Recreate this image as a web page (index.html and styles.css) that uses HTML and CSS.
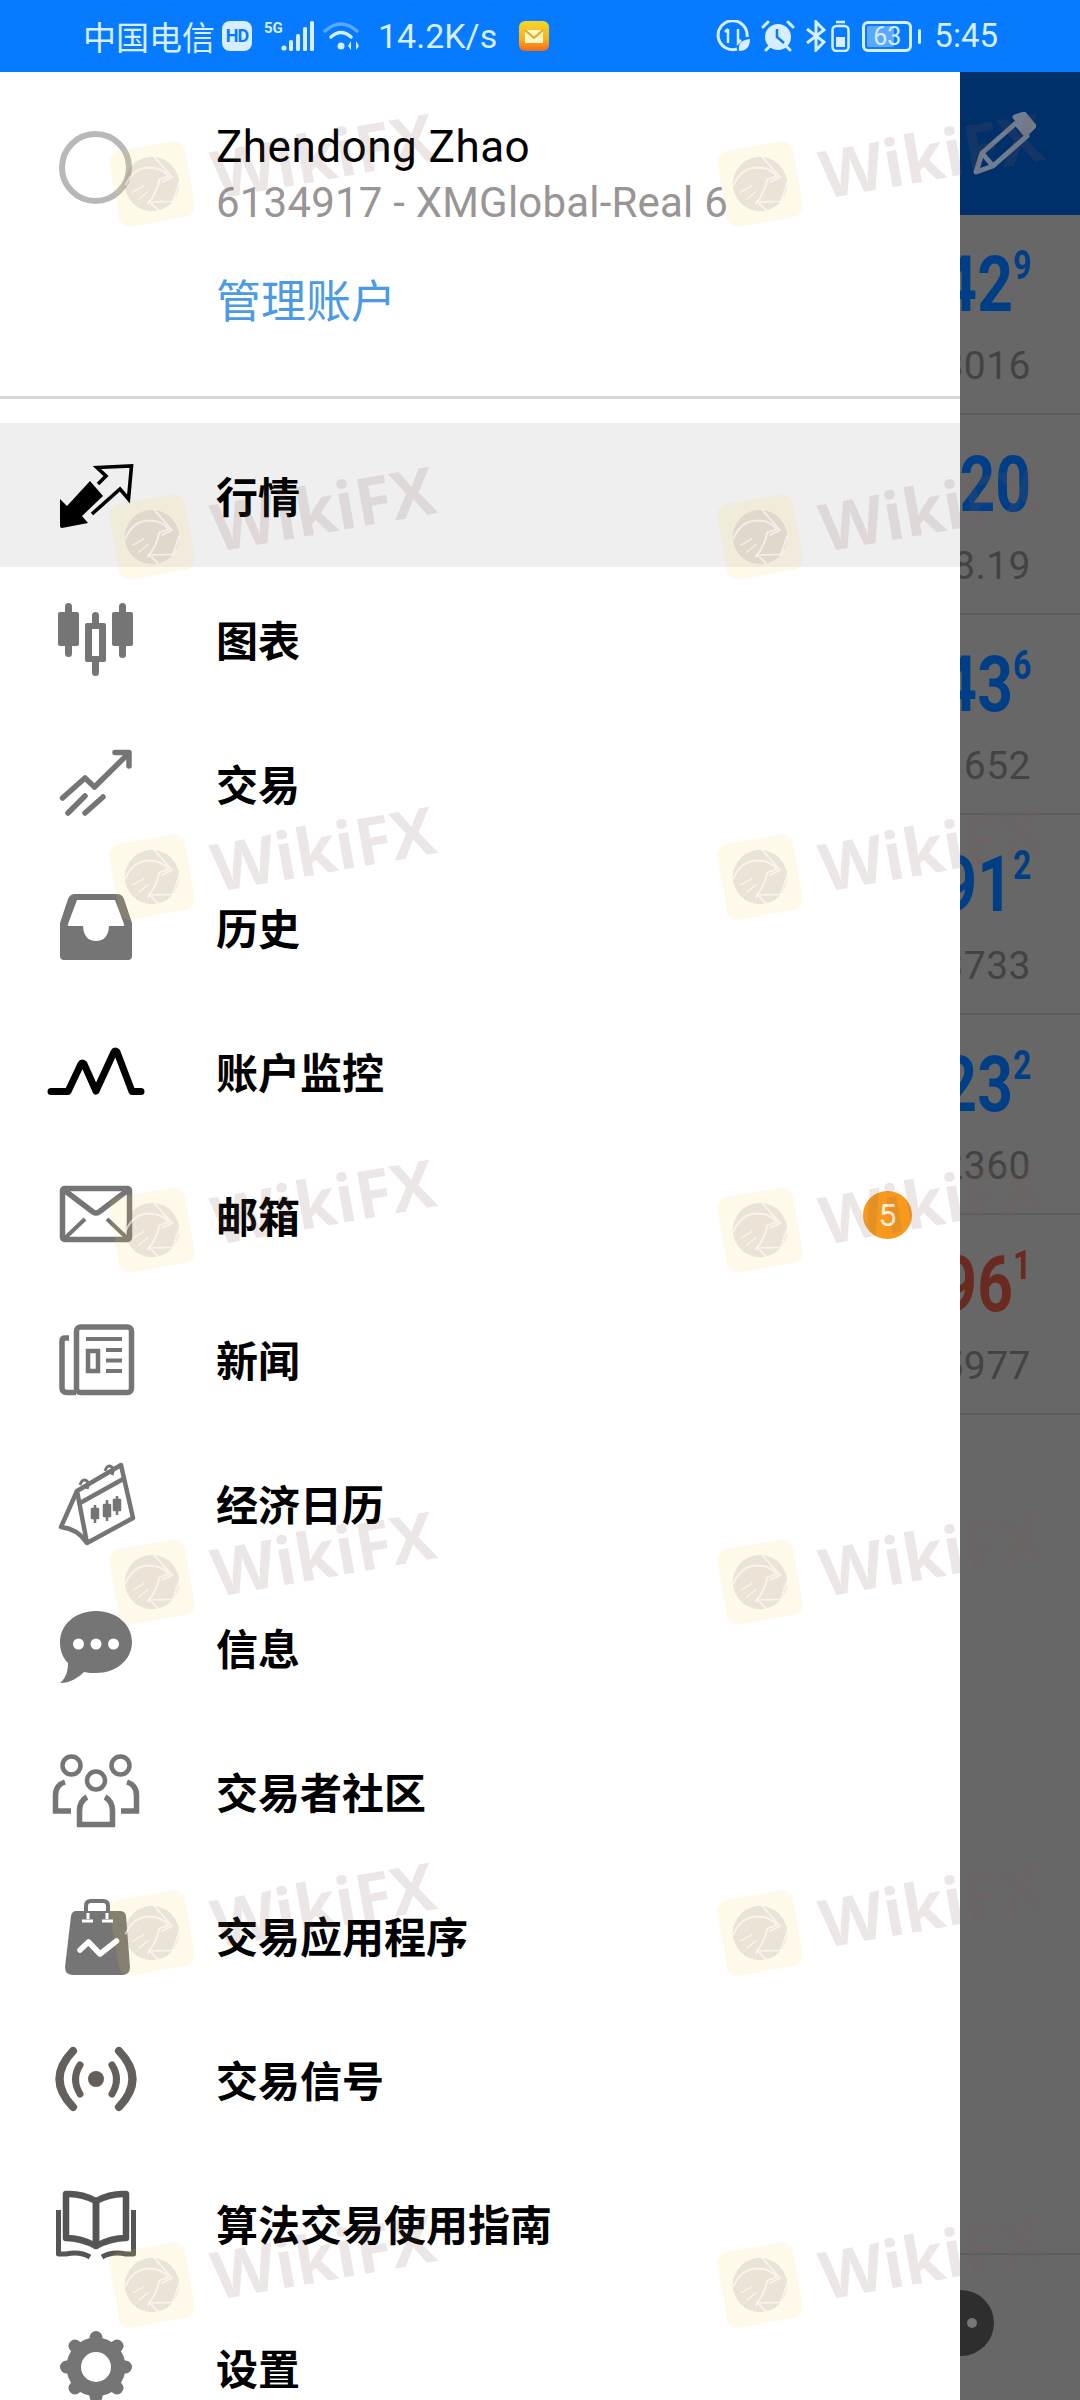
FILE: index.html
```html
<!DOCTYPE html>
<html lang="en">
  <head>
    <meta charset="UTF-8" />
    <meta name="viewport" content="width=device-width, initial-scale=1.0" />
    <title>Menu</title>
    <link rel="stylesheet" href="styles.css">
  </head>
  <body>
    <svg class="defs" width="0" height="0">
      <symbol id="eagle" viewBox="0 0 100 100">
        <rect x="2" y="2" width="96" height="96" rx="14" fill="#ffd35c" fill-opacity="0.13" />
        <circle cx="50" cy="50" r="34" fill="#8a7a78" fill-opacity="0.17" />
        <g fill="none" stroke="#fff" stroke-opacity="0.6" stroke-width="2.4">
          <path d="M58 16 L76 46 L62 50" />
          <path d="M84 54 L72 76 L46 72" />
          <path d="M52 84 L42 70" />
          <path d="M17 46 Q30 26 50 29 Q66 32 72 44 L60 46 Q54 62 40 74" />
          <path d="M24 56 L40 50 M30 66 L44 58" stroke-width="1.6" />
        </g>
      </symbol>
    </svg>

    <div class="status">
      <div class="status-group">
        <span class="carrier">中国电信</span>
        <span class="hd">HD</span>
        <svg class="st-signal" width="50" height="32" viewBox="0 0 50 32">
          <text x="0" y="13" class="five-g">5G</text>
          <g fill="#d6eeff">
            <circle cx="20" cy="28" r="2.6" />
            <rect x="25" y="20" width="4" height="11" rx="1.5" />
            <rect x="32" y="14" width="4" height="17" rx="1.5" />
            <rect x="39" y="7" width="4" height="24" rx="1.5" />
            <rect x="46" y="1" width="4" height="30" rx="1.5" />
          </g>
        </svg>
        <svg class="st-wifi" width="38" height="30" viewBox="0 0 38 30" fill="none" stroke-linecap="round">
          <path d="M2 10 Q18 -4 34 10" stroke="#5aa9ff" stroke-width="3.5" />
          <path d="M8 16 Q18 7 28 16" stroke="#d6eeff" stroke-width="3.5" />
          <circle cx="18" cy="25" r="3.5" fill="#d6eeff" />
          <path d="M28 20 V29 L25 25 Z M33 20 V29 L36 25 Z" fill="#d6eeff" />
        </svg>
        <span class="speed">14.2K/s</span>
        <svg class="st-mail" width="30" height="30" viewBox="0 0 30 30">
          <defs>
            <linearGradient id="mailbg" x1="0" y1="0" x2="0" y2="1">
              <stop offset="0" stop-color="#f2d72f" />
              <stop offset="0.6" stop-color="#fbb017" />
              <stop offset="1" stop-color="#f4691a" />
            </linearGradient>
          </defs>
          <rect width="30" height="30" rx="6" fill="url(#mailbg)" />
          <rect x="6" y="9" width="18" height="13" fill="#fff6c8" />
          <path d="M6 9 L15 17 L24 9" fill="none" stroke="#e8a51c" stroke-width="2" />
        </svg>
      </div>
      <div class="status-group">
        <svg class="st-data" width="36" height="32" viewBox="0 0 36 32" fill="none" stroke="#d6eeff" stroke-width="3">
          <path d="M22 29 A14.5 14.5 0 1 1 32 17" />
          <path d="M13 9 V23 M10 12 L13 9 M23 9 V23 L26 20" stroke-width="2.5" />
          <path d="M24 31 Q22 20 35 19 Q35 31 24 31 Z" fill="#d6eeff" stroke="none" />
        </svg>
        <svg class="st-alarm" width="34" height="32" viewBox="0 0 34 32">
          <circle cx="17" cy="17" r="13" fill="#d6eeff" />
          <path d="M16 9 V17 L23 23" fill="none" stroke="#067bff" stroke-width="2.5" />
          <path d="M2 7 L7 2 M32 7 L27 2 M5 30 L8 27 M29 30 L26 27" stroke="#d6eeff" stroke-width="3" stroke-linecap="round" />
        </svg>
        <svg class="st-bt" width="20" height="32" viewBox="0 0 20 32" fill="none" stroke="#d6eeff" stroke-width="3">
          <path d="M1 9 L18 22 L10 30 V2 L18 10 L1 23" />
        </svg>
        <svg class="st-small-batt" width="19" height="32" viewBox="0 0 19 32" fill="none" stroke="#d6eeff" stroke-width="2.5">
          <path d="M5 2 H14" />
          <rect x="1.5" y="6" width="16" height="25" rx="4" />
          <rect x="5" y="17" width="9" height="10" fill="#d6eeff" stroke="none" />
        </svg>
        <div class="battery">
          <span class="battery-level"></span>
          <span class="battery-num">63</span>
        </div>
        <span class="battery-tip"></span>
        <span class="clock">5:45</span>
      </div>
    </div>

    <div class="main">
      <div class="drawer">
        <div class="account">
          <div class="avatar"></div>
          <div class="account-text">
            <div class="acc-name">Zhendong Zhao</div>
            <div class="acc-server">6134917 - XMGlobal-Real 6</div>
            <div class="acc-manage">管理账户</div>
          </div>
        </div>

        <div class="menu">
          <div class="menu-row active">
            <svg class="icon" viewBox="0 0 100 100">
              <path d="M14 54 L21 61 L44 36 L57 51 L36 71 L42 78 L16 83 Q14 83 14 81 Z" />
              <path d="M46 69 L74 44 L82.5 54 L85.5 21 L51 22.5 L60 31 L52 39" fill="none" stroke="#000" stroke-width="3.6" stroke-linejoin="miter" />
            </svg>
            <span class="menu-label">行情</span>
          </div>
          <div class="menu-row">
            <svg class="icon" viewBox="0 0 100 100" fill="#757575">
              <rect x="19" y="14" width="7" height="54" rx="3.5" />
              <rect x="12" y="23" width="21" height="34" rx="2" />
              <rect x="73" y="14" width="7" height="55" rx="3.5" />
              <rect x="66" y="23" width="21" height="34" rx="2" />
              <rect x="46" y="23" width="7" height="64" rx="3.5" />
              <path fill-rule="evenodd" d="M41 34 H58 Q60 34 60 36 V71 Q60 73 58 73 H41 Q39 73 39 71 V36 Q39 34 41 34 Z M46 40 V67 H53 V40 Z" />
              <rect x="46" y="40" width="7" height="27" fill="#fff" />
            </svg>
            <span class="menu-label">图表</span>
          </div>
          <div class="menu-row">
            <svg class="icon" viewBox="0 0 100 100" fill="none" stroke="#757575" stroke-width="5.5" stroke-linecap="round" stroke-linejoin="round">
              <path d="M16.5 65 L39 45 L48.5 54 L80 23" />
              <path d="M69 19.5 H83 V33" />
              <path d="M22 80 L39 63 M39 80 L57 64" stroke-width="5.5" />
            </svg>
            <span class="menu-label">交易</span>
          </div>
          <div class="menu-row">
            <svg class="icon" viewBox="0 0 100 100">
              <path fill="#757575" fill-rule="evenodd" d="M29 17 H71 Q76 17 78 22 L86 46 V79 Q86 83 82 83 H18 Q14 83 14 79 V46 L22 22 Q24 17 29 17 Z M31 23 L22 47 Q21 49 24 49 H37 Q38 64 50 64 Q62 64 63 49 H76 Q79 49 78 47 L69 23 Z" />
            </svg>
            <span class="menu-label">历史</span>
          </div>
          <div class="menu-row">
            <svg class="icon" viewBox="0 0 100 100" fill="none" stroke="#000" stroke-width="7" stroke-linecap="round" stroke-linejoin="round">
              <path d="M5 70.5 H22 L35 43 Q36 41 38 43 L50 70 L68 31 Q69 29 71 31 L86 70.5 H95" />
            </svg>
            <span class="menu-label">账户监控</span>
          </div>
          <div class="menu-row">
            <svg class="icon" viewBox="0 0 100 100" fill="none" stroke="#757575" stroke-width="5.5" stroke-linejoin="round">
              <rect x="16.5" y="23.5" width="67" height="51" rx="2" />
              <path d="M18 25 L47 47 Q50 49 53 47 L82 25" />
              <path d="M19 73 L39 54 M81 73 L61 54" stroke-width="4" />
            </svg>
            <span class="menu-label">邮箱</span>
            <span class="badge">5</span>
          </div>
          <div class="menu-row">
            <svg class="icon" viewBox="0 0 100 100" fill="none" stroke="#757575" stroke-width="5.5">
              <rect x="30.5" y="18" width="55" height="65.5" rx="4" />
              <path d="M23 29 H19 Q16 29 16 32 V79 Q16 83.5 21 83.5 H30" />
              <path d="M40 30 H76 M60 41 H76 M60 51.5 H76 M60 62 H76" stroke-width="4" />
              <rect x="42" y="42" width="10" height="20" stroke-width="4.5" />
            </svg>
            <span class="menu-label">新闻</span>
          </div>
          <div class="menu-row">
            <svg class="icon" viewBox="0 0 100 100" fill="none" stroke="#757575" stroke-width="4.5" stroke-linejoin="round">
              <path d="M31 38 L75 12 L87 65 L41 90 Z" />
              <path d="M34 50 L79 25" />
              <path d="M31 38 L15 74 Q32 76 41 90" />
              <path d="M34 32 Q36 25 41 28 Q43 31 41 36 M59 18 Q61 11 66 14 Q68 17 66 22" stroke-width="3" />
              <path d="M49 52 V70 M61 47 V68 M71 43 V62" stroke-width="2.5" />
              <path d="M46 56 H52 V65 H46 Z M58 52 H64 V63 H58 Z M68 47 H74 V57 H68 Z" stroke-width="2.5" fill="#757575" />
            </svg>
            <span class="menu-label">经济日历</span>
          </div>
          <div class="menu-row">
            <svg class="icon" viewBox="0 0 100 100">
              <path fill="#757575" d="M50 14 C71 14 86 28 86 45 C86 63 70 76 50 76 C46 76 42 76 38 75 C32 81 24 86 14 86 C20 81 22 74 22 66 C16 60 14 53 14 45 C14 28 29 14 50 14 Z" />
              <g fill="#fff">
                <ellipse cx="32.5" cy="47" rx="5.5" ry="5.5" />
                <ellipse cx="50" cy="47" rx="5.5" ry="5.5" />
                <ellipse cx="67.5" cy="47" rx="5.5" ry="5.5" />
              </g>
            </svg>
            <span class="menu-label">信息</span>
          </div>
          <div class="menu-row">
            <svg class="icon" viewBox="0 0 100 100" fill="none" stroke="#757575" stroke-width="5.5">
              <circle cx="25.5" cy="24.5" r="9" stroke-width="4.5" />
              <circle cx="74.5" cy="24.5" r="9" stroke-width="4.5" />
              <circle cx="50" cy="39.5" r="9" stroke-width="4.5" />
              <path d="M19 41 Q9.5 44 9.5 54 V70 H25" />
              <path d="M81 41 Q90.5 44 90.5 54 V70 H75" />
              <path d="M41 56 Q33.5 60 33.5 70 V83.5 H66.5 V70 Q66.5 60 59 56" />
            </svg>
            <span class="menu-label">交易者社区</span>
          </div>
          <div class="menu-row">
            <svg class="icon" viewBox="0 0 100 100">
              <path fill="#757575" d="M30 26 H74 Q79 26 80 31 L84 82 Q84 90 76 90 H27 Q19 90 19 82 L25 31 Q26 26 30 26 Z" />
              <path d="M40 33 V21 Q40 16 45 16 H57 Q62 16 62 21 V33" fill="none" stroke="#757575" stroke-width="4" />
              <path d="M36 36 H47 M56 36 H67 M42 28 V34 M61 28 V34" stroke="#fff" stroke-width="3" fill="none" />
              <path d="M34 65 L42.5 57 L54 69 L70.5 56" fill="none" stroke="#fff" stroke-width="5.5" stroke-linecap="round" stroke-linejoin="round" />
            </svg>
            <span class="menu-label">交易应用程序</span>
          </div>
          <div class="menu-row">
            <svg class="icon" viewBox="0 0 100 100" fill="none" stroke="#655f5c" stroke-linecap="round">
              <ellipse cx="50" cy="50" rx="8" ry="8" fill="#655f5c" stroke="none" />
              <path d="M34 36 Q25 50 34 65 M66 36 Q75 50 66 65" stroke-width="7" />
              <path d="M27 22 Q0 50 27 78 M73 22 Q100 50 73 78" stroke-width="8" />
            </svg>
            <span class="menu-label">交易信号</span>
          </div>
          <div class="menu-row">
            <svg class="icon" viewBox="0 0 100 100" fill="none" stroke="#555" stroke-width="6.5" stroke-linejoin="round">
              <path d="M20 21 Q35 20 50 28 V73 Q35 65 20 65 Z" />
              <path d="M80 21 Q65 20 50 28 V73 Q65 65 80 65 Z" />
              <path d="M12.5 37 V81 H20 Q34 78 44 84 M87.5 37 V81 H80 Q66 78 56 84" stroke-width="5" />
            </svg>
            <span class="menu-label">算法交易使用指南</span>
          </div>
          <div class="menu-row">
            <svg class="icon" viewBox="0 0 100 100" fill="none" stroke="#757575">
              <circle cx="50" cy="50" r="22" stroke-width="15" />
              <g stroke-width="13" stroke-linecap="round">
                <path d="M50 20.5 V79.5 M20.5 50 H79.5 M29 29 L71 71 M71 29 L29 71" />
              </g>
              <circle cx="50" cy="50" r="15" fill="#fff" stroke="none" />
            </svg>
            <span class="menu-label">设置</span>
          </div>
        </div>
      </div>

      <div class="scrim">
        <div class="scrim-head">
          <svg width="64" height="64" viewBox="0 0 64 64" fill="none" stroke="#717d90" stroke-width="5" stroke-linejoin="round">
            <path d="M4 60 L10 41 L44 11 L55 24 L21 54 Z" />
            <path d="M10 41 L21 54" />
            <path d="M43 5 L52 2 L62 14 L56 20 Z" fill="#717d90" />
          </svg>
        </div>
        <div class="quote">
          <div class="q-big">1.1042<sup>9</sup></div>
          <div class="q-small">1.08016</div>
        </div>
        <div class="quote">
          <div class="q-big">1420</div>
          <div class="q-small">1278.19</div>
        </div>
        <div class="quote">
          <div class="q-big">1.2143<sup>6</sup></div>
          <div class="q-small">1.1652</div>
        </div>
        <div class="quote">
          <div class="q-big">1.3791<sup>2</sup></div>
          <div class="q-small">1.3733</div>
        </div>
        <div class="quote">
          <div class="q-big">0.9123<sup>2</sup></div>
          <div class="q-small">0.92360</div>
        </div>
        <div class="quote down">
          <div class="q-big">1.5996<sup>1</sup></div>
          <div class="q-small">1.5977</div>
        </div>
        <div class="scrim-bottom">
          <div class="fab"><span class="fab-dot"></span><span class="fab-dot"></span></div>
        </div>
      </div>
    </div>

    <div class="marks">
      <div class="wm"><svg class="wm-logo"><use href="#eagle" /></svg><span>WikiFX</span></div>
      <div class="wm"><svg class="wm-logo"><use href="#eagle" /></svg><span>WikiFX</span></div>
      <div class="wm"><svg class="wm-logo"><use href="#eagle" /></svg><span>WikiFX</span></div>
      <div class="wm"><svg class="wm-logo"><use href="#eagle" /></svg><span>WikiFX</span></div>
      <div class="wm"><svg class="wm-logo"><use href="#eagle" /></svg><span>WikiFX</span></div>
      <div class="wm"><svg class="wm-logo"><use href="#eagle" /></svg><span>WikiFX</span></div>
      <div class="wm"><svg class="wm-logo"><use href="#eagle" /></svg><span>WikiFX</span></div>
      <div class="wm"><svg class="wm-logo"><use href="#eagle" /></svg><span>WikiFX</span></div>
      <div class="wm"><svg class="wm-logo"><use href="#eagle" /></svg><span>WikiFX</span></div>
      <div class="wm"><svg class="wm-logo"><use href="#eagle" /></svg><span>WikiFX</span></div>
      <div class="wm"><svg class="wm-logo"><use href="#eagle" /></svg><span>WikiFX</span></div>
      <div class="wm"><svg class="wm-logo"><use href="#eagle" /></svg><span>WikiFX</span></div>
      <div class="wm"><svg class="wm-logo"><use href="#eagle" /></svg><span>WikiFX</span></div>
      <div class="wm"><svg class="wm-logo"><use href="#eagle" /></svg><span>WikiFX</span></div>
    </div>
  </body>
</html>
```

FILE: styles.css
```css
* {
  box-sizing: border-box;
}

html,
body {
  margin: 0;
  height: 2400px;
  overflow: hidden;
}

body {
  position: relative;
  display: flex;
  flex-direction: column;
  font-family: Roboto, "Noto Sans CJK SC", sans-serif;
  background-color: #ffffff;
}

.defs {
  position: absolute;
}

/* status bar */
.status {
  flex: none;
  height: 72px;
  padding: 0 82px 0 83px;
  display: flex;
  justify-content: space-between;
  align-items: center;
  background-color: #067bff;
  color: #d6eeff;
}

.status-group {
  display: flex;
  align-items: center;
}

.carrier {
  font-family: "Noto Sans CJK SC", sans-serif;
  font-size: 33px;
  line-height: 40px;
}

.hd {
  margin-left: 7px;
  width: 30px;
  height: 30px;
  border-radius: 8px;
  background-color: #d6eeff;
  color: #067bff;
  font-family: "Roboto", sans-serif;
  font-size: 18px;
  font-weight: 700;
  line-height: 30px;
  text-align: center;
  letter-spacing: -1px;
}

.five-g {
  font-family: "Roboto", sans-serif;
  font-size: 15px;
  font-weight: 700;
  fill: #d6eeff;
}

.st-signal {
  margin-left: 12px;
}

.st-wifi {
  margin-left: 9px;
}

.speed {
  margin-left: 17px;
  font-size: 34px;
  line-height: 40px;
}

.st-mail {
  margin-left: 22px;
}

.st-alarm {
  margin-left: 10px;
}

.st-bt {
  margin-left: 11px;
}

.st-small-batt {
  margin-left: 5px;
}

.battery {
  position: relative;
  margin-left: 12px;
  width: 50px;
  height: 31px;
  border: 3px solid #d6eeff;
  border-radius: 6px;
  font-size: 25px;
  line-height: 25px;
  text-align: center;
}

.battery-level {
  position: absolute;
  left: 2px;
  top: 2px;
  bottom: 2px;
  width: 27px;
  border-radius: 2px;
  background-color: #5aa9ff;
}

.battery-num {
  position: relative;
}

.battery-tip {
  margin-left: 6px;
  width: 3px;
  height: 15px;
  border-radius: 2px;
  background-color: #d6eeff;
}

.clock {
  margin-left: 13px;
  font-size: 33px;
  line-height: 40px;
}

/* drawer */
.main {
  flex: 1;
  min-height: 0;
  display: flex;
}

.drawer {
  flex: none;
  width: 960px;
  background-color: #ffffff;
  overflow: hidden;
}

.account {
  height: 327px;
  padding: 50px 0 0 59px;
  display: flex;
  border-bottom: 3px solid #d8d8d8;
}

.avatar {
  flex: none;
  margin-top: 9px;
  width: 73px;
  height: 73px;
  border: 6px solid #b8b8b8;
  border-radius: 50%;
}

.account-text {
  margin-left: 84px;
}

.acc-name {
  font-size: 44px;
  line-height: 50px;
  letter-spacing: 0.5px;
  color: #000000;
}

.acc-server {
  margin-top: 6px;
  font-size: 42px;
  line-height: 50px;
  letter-spacing: 0.2px;
  color: #999594;
}

.acc-manage {
  margin-top: 43px;
  font-family: "Noto Sans CJK SC", sans-serif;
  font-size: 45px;
  line-height: 56px;
  color: #4a9ae6;
}

.menu {
  margin-top: 24px;
}

.menu-row {
  height: 144px;
  padding-left: 46px;
  display: flex;
  align-items: center;
}

.menu-row.active {
  background-color: #efefef;
}

.icon {
  flex: none;
  width: 100px;
  height: 100px;
}

.menu-label {
  margin-left: 70px;
  font-family: "Noto Sans CJK SC", sans-serif;
  font-size: 42px;
  font-weight: 700;
  line-height: 56px;
  color: #000000;
}

.badge {
  margin-left: auto;
  margin-right: 48px;
  width: 49px;
  height: 48px;
  border-radius: 50%;
  background-color: #f7991c;
  color: #fff4de;
  font-size: 32px;
  line-height: 48px;
  text-align: center;
}

/* dimmed screen behind the drawer */
.scrim {
  flex: 1;
  min-width: 0;
  display: flex;
  flex-direction: column;
  background-color: #676767;
  overflow: hidden;
}

.scrim-head {
  flex: none;
  height: 143px;
  padding: 40px 0 0 12px;
  background-color: #00306a;
}

.quote {
  flex: none;
  height: 200px;
  padding: 27px 49px 0 0;
  display: flex;
  flex-direction: column;
  align-items: flex-end;
  border-bottom: 2px solid #5e5e5e;
  white-space: nowrap;
}

.q-big {
  height: 86px;
  font-size: 78px;
  font-weight: 700;
  line-height: 86px;
  color: #003f86;
  transform: scaleX(0.8);
  transform-origin: right center;
}

.q-big sup {
  font-size: 40px;
  line-height: 0;
  vertical-align: 32px;
}

.q-small {
  margin-top: 15px;
  font-size: 39px;
  line-height: 46px;
  letter-spacing: 0.5px;
  color: #434343;
}

.down .q-big {
  color: #6b2a20;
}

.scrim-bottom {
  position: relative;
  margin-top: auto;
  flex: none;
  height: 147px;
  border-top: 2px solid #5e5e5e;
}

.fab {
  position: absolute;
  left: -32px;
  top: 35px;
  width: 66px;
  height: 66px;
  padding-left: 22px;
  display: flex;
  align-items: center;
  gap: 7px;
  border-radius: 50%;
  background-color: #2e2e2e;
}

.fab-dot {
  width: 10px;
  height: 10px;
  border-radius: 50%;
  background-color: #777777;
}

/* watermark laid over the whole page */
.marks {
  position: absolute;
  inset: 0;
  padding: 143px 0 0 112px;
  display: grid;
  grid-template-columns: 608px 360px;
  grid-template-rows: 353px 340px 353px 352px 351px 352px auto;
  pointer-events: none;
}

.wm {
  height: 82px;
  display: flex;
  align-items: center;
  gap: 21px;
  transform: rotate(-10deg);
  transform-origin: 40px 41px;
  color: rgba(130, 95, 85, 0.15);
  font-family: "Open Sans", sans-serif;
  font-size: 66px;
  font-weight: 700;
  white-space: nowrap;
}

.wm-logo {
  flex: none;
  width: 80px;
  height: 80px;
}
```
